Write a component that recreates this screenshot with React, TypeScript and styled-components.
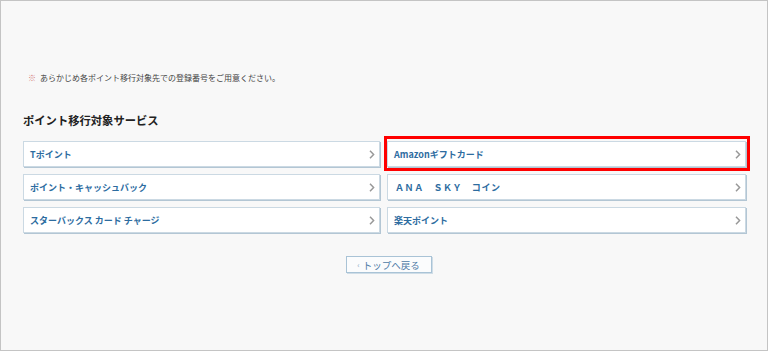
import React from "react";
import styled, { createGlobalStyle } from "styled-components";

const Global = createGlobalStyle`
  html, body { margin: 0; padding: 0; background: #f8f8f8; }
  body { font-family: "Noto Sans CJK JP", "Noto Sans", sans-serif; }
  * { box-sizing: border-box; }
`;

const Frame = styled.div`
  width: 768px;
  height: 351px;
  border: 1px solid #c4c4c4;
  background: #f8f8f8;
  padding: 0 21px 0 22px;
  display: flex;
  flex-direction: column;
`;

const Notice = styled.p`
  margin: 70px 0 0;
  padding-left: 5px;
  font-size: 8px;
  line-height: 13px;
  color: #444;
`;

const Mark = styled.span`
  color: #d47a7a;
  margin-right: 4px;
`;

const Heading = styled.h2`
  margin: 28px 0 0;
  font-size: 11.3px;
  line-height: 16px;
  font-weight: 700;
  color: #222;
`;

const Grid = styled.div`
  margin-top: 13px;
  display: grid;
  grid-template-columns: 357px 359px;
  column-gap: 7px;
  row-gap: 7px;
`;

const Item = styled.a<{ $wide?: boolean }>`
  position: relative;
  height: 26px;
  display: flex;
  align-items: center;
  justify-content: space-between;
  padding: 0 4px 0 ${(p) => (p.$wide ? "7px" : "6px")};
  background: #fff;
  border: 1px solid #cbd9e3;
  box-shadow: 1px 1px 0 #b3c6d4;
  color: #2d6c9f;
  font-size: 9px;
  font-weight: 700;
  text-decoration: none;
  letter-spacing: ${(p) => (p.$wide ? "0.6px" : "0")};
  cursor: pointer;
`;

const Chevron = styled.svg`
  width: 6px;
  height: 9px;
  flex: none;
`;

const Highlight = styled.span`
  position: absolute;
  top: -6px;
  left: -4px;
  right: -5px;
  bottom: -5px;
  border: 3px solid #ff0000;
  pointer-events: none;
`;

const BackRow = styled.div`
  margin-top: 23px;
  display: flex;
  justify-content: center;
  padding-left: 8px;
`;

const BackButton = styled.a`
  width: 86px;
  height: 17px;
  display: flex;
  align-items: center;
  justify-content: center;
  gap: 3px;
  background: #fbfcfd;
  border: 1px solid #a9c3d6;
  box-shadow: 1px 1px 0 #cfdde7;
  color: #4d7aa6;
  font-size: 9.5px;
  text-decoration: none;
`;

const BackArrow = styled.span`
  color: #8aa7c2;
  font-size: 8px;
`;

const Arrow = () => (
  <Chevron viewBox="0 0 6 9">
    <path d="M1 0.8 L4.6 4.5 L1 8.2" fill="none" stroke="#999999" strokeWidth="1.5" />
  </Chevron>
);

const items: { label: string; wide?: boolean; hl?: boolean }[] = [
  { label: "Tポイント" },
  { label: "Amazonギフトカード", hl: true },
  { label: "ポイント・キャッシュバック" },
  { label: "ＡＮＡ　ＳＫＹ　コイン", wide: true },
  { label: "スターバックス カード チャージ" },
  { label: "楽天ポイント" },
];

export default function App() {
  return (
    <>
      <Global />
      <Frame>
        <Notice>
          <Mark>※</Mark>あらかじめ各ポイント移行対象先での登録番号をご用意ください。
        </Notice>
        <Heading>ポイント移行対象サービス</Heading>
        <Grid>
          {items.map((it) => (
            <Item key={it.label} $wide={it.wide}>
              <span>{it.label}</span>
              <Arrow />
              {it.hl && <Highlight />}
            </Item>
          ))}
        </Grid>
        <BackRow>
          <BackButton>
            <BackArrow>‹</BackArrow>トップへ戻る
          </BackButton>
        </BackRow>
      </Frame>
    </>
  );
}
